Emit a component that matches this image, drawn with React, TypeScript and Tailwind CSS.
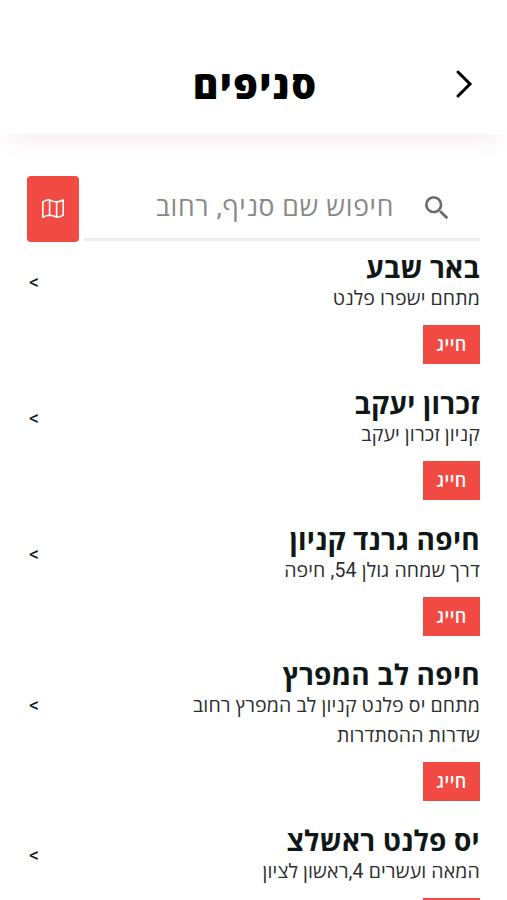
import { MdSearch } from "react-icons/md"

interface Branch {
  name: string
  address: string
}

const branches: Branch[] = [
  { name: "באר שבע", address: "מתחם ישפרו פלנט" },
  { name: "זכרון יעקב", address: "קניון זכרון יעקב" },
  { name: "חיפה גרנד קניון", address: "דרך שמחה גולן 54, חיפה" },
  { name: "חיפה לב המפרץ", address: "מתחם יס פלנט קניון לב המפרץ רחוב שדרות ההסתדרות" },
  { name: "יס פלנט ראשלצ", address: "המאה ועשרים 4,ראשון לציון" },
]

function MapIcon() {
  return (
    <svg
      width="24"
      height="22"
      viewBox="0 0 24 22"
      fill="none"
      stroke="currentColor"
      strokeWidth="1.6"
      strokeLinejoin="round"
      strokeLinecap="round"
    >
      <path d="M1.8 4.6 Q1.8 3.8 2.6 3.4 Q5.4 1.6 8.6 1.9 Q12 3.8 15.6 3.9 Q19 3.8 22.2 2 V16.4 Q22.2 17.2 21.4 17.6 Q18.6 19.3 15.6 19.2 Q12 17.2 8.6 17.2 Q5 17.4 1.8 19.2 Z" />
      <path d="M8.6 1.9 V17.2 M15.6 3.9 V19.2" />
    </svg>
  )
}

function BranchRow({ name, address }: Branch) {
  return (
    <li className="flex justify-between">
      <div className="w-[300px] pb-[24.75px]">
        <h2 className="pt-px text-[28px] leading-[30px] font-bold tracking-[0.3px]">{name}</h2>
        <p className="text-[19.5px] leading-[30px] tracking-[0.15px] text-[#2a2e2e]">{address}</p>
        <button className="mt-[11px] block h-[39px] w-[57px] bg-[#f04a43] text-[18px] leading-[37px] font-semibold tracking-[0.4px] text-white">
          חייג
        </button>
      </div>
      <span className="self-center pb-[77px] pl-[2px] text-[20px] leading-none">&gt;</span>
    </li>
  )
}

export default function App() {
  return (
    <div dir="rtl" className="h-[900px] overflow-hidden bg-white font-[Roboto,'Open_Sans',sans-serif] text-[#101817]">
      <header className="relative flex h-[134px] items-center justify-center pt-[39px] shadow-[0_14px_24px_-8px_#f6ecee]">
        <h1 className="pl-[3px] text-[39px] font-extrabold tracking-[1.3px] text-black">סניפים</h1>
        <svg className="absolute top-[69px] right-[34px] text-black" width="18" height="30" viewBox="0 0 18 30" fill="none">
          <path d="M3 3 L15 15 L3 27" stroke="currentColor" strokeWidth="3" strokeLinecap="round" />
        </svg>
      </header>

      <div className="flex justify-between px-[27px] pt-[42px]">
        <div className="flex h-[65px] w-[396px] items-center gap-[27px] border-b-3 border-[#ebeced] pr-[27px]">
          <MdSearch className="mt-0.5 size-8 text-[#6b6b6b]" />
          <span className="text-[26.5px] tracking-[0.7px] text-[#888]">חיפוש שם סניף, רחוב</span>
        </div>
        <button className="flex h-[66px] w-[52px] items-center justify-center rounded-[4px] bg-[#f04a43] text-white">
          <MapIcon />
        </button>
      </div>

      <ul className="px-[27px] pt-[11px]">
        {branches.map((branch) => (
          <BranchRow key={branch.name} {...branch} />
        ))}
      </ul>
    </div>
  )
}
